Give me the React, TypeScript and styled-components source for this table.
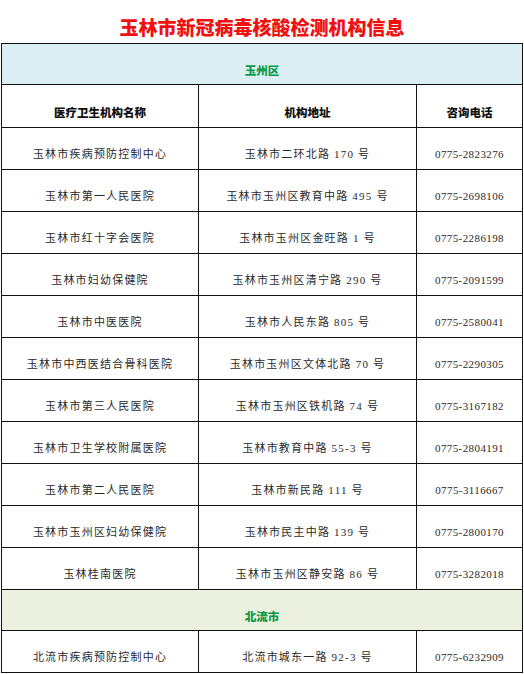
import React from "react";
import styled, { createGlobalStyle } from "styled-components";

const GlobalStyle = createGlobalStyle`
  body {
    margin: 0;
    background: #fff;
    font-family: "Liberation Serif", "Noto Sans CJK SC", serif;
  }
`;

const Page = styled.div`
  width: 524px;
`;

const Title = styled.h1`
  margin: 0;
  height: 43px;
  box-sizing: border-box;
  padding-top: 17px;
  text-align: center;
  font-family: "Noto Sans CJK SC", sans-serif;
  font-size: 19px;
  line-height: 20px;
  font-weight: 900;
  color: #f01010;
  letter-spacing: 0px;
`;

const Table = styled.table`
  margin-left: 1px;
  width: 521px;
  border-collapse: collapse;
  table-layout: fixed;
  border: 1px solid #111;
`;

const Cell = styled.td<{ $phone?: boolean }>`
  height: 42px;
  box-sizing: border-box;
  padding: 11px 0 0;
  border: 1px solid #111;
  text-align: center;
  vertical-align: middle;
  font-family: "Liberation Serif", "Noto Sans CJK SC", serif;
  font-size: 11px;
  line-height: 14px;
  color: #2a2a2a;
  letter-spacing: ${(p) => (p.$phone ? "0.4px" : "1.2px")};
  white-space: nowrap;
`;

const HeadCell = styled.th`
  height: 43px;
  box-sizing: border-box;
  padding: 12px 0 0;
  border: 1px solid #111;
  text-align: center;
  font-family: "Noto Sans CJK SC", sans-serif;
  font-size: 11.5px;
  font-weight: 900;
  line-height: 14px;
  color: #111;
`;

const RegionCell = styled.td<{ $bg: string }>`
  height: 41px;
  box-sizing: border-box;
  padding: 12px 0 0;
  border: 1px solid #111;
  background: ${(p) => p.$bg};
  text-align: center;
  font-family: "Noto Sans CJK SC", sans-serif;
  font-size: 11.5px;
  font-weight: 900;
  line-height: 14px;
  color: #0a9a4a;
`;

type Row = [string, string, string];

const yuzhou: Row[] = [
  ["玉林市疾病预防控制中心", "玉林市二环北路 170 号", "0775-2823276"],
  ["玉林市第一人民医院", "玉林市玉州区教育中路 495 号", "0775-2698106"],
  ["玉林市红十字会医院", "玉林市玉州区金旺路 1 号", "0775-2286198"],
  ["玉林市妇幼保健院", "玉林市玉州区清宁路 290 号", "0775-2091599"],
  ["玉林市中医医院", "玉林市人民东路 805 号", "0775-2580041"],
  ["玉林市中西医结合骨科医院", "玉林市玉州区文体北路 70 号", "0775-2290305"],
  ["玉林市第三人民医院", "玉林市玉州区铁机路 74 号", "0775-3167182"],
  ["玉林市卫生学校附属医院", "玉林市教育中路 55-3 号", "0775-2804191"],
  ["玉林市第二人民医院", "玉林市新民路 111 号", "0775-3116667"],
  ["玉林市玉州区妇幼保健院", "玉林市民主中路 139 号", "0775-2800170"],
  ["玉林桂南医院", "玉林市玉州区静安路 86 号", "0775-3282018"],
];

const beiliu: Row[] = [
  ["北流市疾病预防控制中心", "北流市城东一路 92-3 号", "0775-6232909"],
];

function DataRows({ rows }: { rows: Row[] }) {
  return (
    <>
      {rows.map((r, i) => (
        <tr key={i}>
          <Cell>{r[0]}</Cell>
          <Cell>{r[1]}</Cell>
          <Cell $phone>{r[2]}</Cell>
        </tr>
      ))}
    </>
  );
}

export default function App() {
  return (
    <Page>
      <GlobalStyle />
      <Title>玉林市新冠病毒核酸检测机构信息</Title>
      <Table>
        <colgroup>
          <col style={{ width: 197 }} />
          <col style={{ width: 218 }} />
          <col style={{ width: 106 }} />
        </colgroup>
        <tbody>
          <tr>
            <RegionCell colSpan={3} $bg="#daeef3">玉州区</RegionCell>
          </tr>
          <tr>
            <HeadCell>医疗卫生机构名称</HeadCell>
            <HeadCell>机构地址</HeadCell>
            <HeadCell>咨询电话</HeadCell>
          </tr>
          <DataRows rows={yuzhou} />
          <tr>
            <RegionCell colSpan={3} $bg="#ebf1de">北流市</RegionCell>
          </tr>
          <DataRows rows={beiliu} />
        </tbody>
      </Table>
    </Page>
  );
}
